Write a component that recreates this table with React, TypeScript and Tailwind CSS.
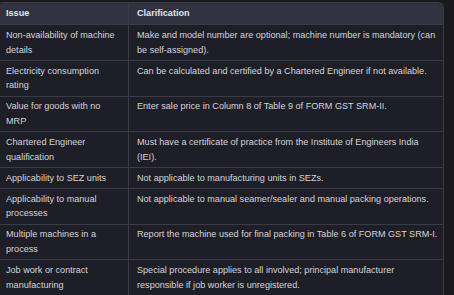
const rows: [string[], string[]][] = [
  [["Non-availability of machine", "details"], ["Make and model number are optional; machine number is mandatory (can", "be self-assigned)."]],
  [["Electricity consumption", "rating"], ["Can be calculated and certified by a Chartered Engineer if not available."]],
  [["Value for goods with no", "MRP"], ["Enter sale price in Column 8 of Table 9 of FORM GST SRM-II."]],
  [["Chartered Engineer", "qualification"], ["Must have a certificate of practice from the Institute of Engineers India", "(IEI)."]],
  [["Applicability to SEZ units"], ["Not applicable to manufacturing units in SEZs."]],
  [["Applicability to manual", "processes"], ["Not applicable to manual seamer/sealer and manual packing operations."]],
  [["Multiple machines in a", "process"], ["Report the machine used for final packing in Table 6 of FORM GST SRM-I."]],
  [["Job work or contract", "manufacturing"], ["Special procedure applies to all involved; principal manufacturer", "responsible if job worker is unregistered."]],
];

function Lines({ lines }: { lines: string[] }) {
  return (
    <>
      {lines.map((l, i) => (
        <div key={i} className="whitespace-nowrap">
          {l}
        </div>
      ))}
    </>
  );
}

export default function App() {
  return (
    <div
      className="w-[454px] h-[295px] overflow-hidden bg-[#19191e] pt-[2px]"
      style={{ fontFamily: "'Liberation Sans', Arial, sans-serif" }}
    >
      <div className="-ml-[3px] w-[447px] rounded-t-[6px] border border-b-0 border-[#3a3b46] bg-[#1e1e26] overflow-hidden text-[9.1px] leading-[14.75px] text-[#d4d5dc]">
        <div className="grid grid-cols-[131px_1fr] bg-[#30333f] font-bold text-[#e4e5ea]">
          <div className="px-2 py-[3.3px] border-r border-[#3a3b46]">Issue</div>
          <div className="px-2 py-[3.3px]">Clarification</div>
        </div>
        {rows.map(([a, b], i) => (
          <div key={i} className="grid grid-cols-[131px_1fr] border-t border-[#3a3b46]">
            <div className="px-2 py-[2.6px] border-r border-[#3a3b46]">
              <Lines lines={a} />
            </div>
            <div className="px-2 py-[2.6px]">
              <Lines lines={b} />
            </div>
          </div>
        ))}
      </div>
    </div>
  );
}
